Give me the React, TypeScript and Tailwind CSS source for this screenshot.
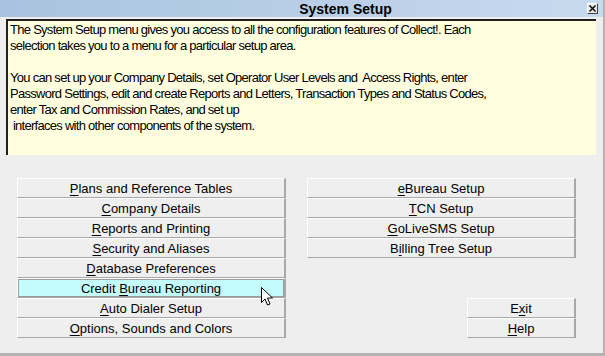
const leftButtons: [string, string, string][] = [
  ["", "P", "lans and Reference Tables"],
  ["", "C", "ompany Details"],
  ["", "R", "eports and Printing"],
  ["", "S", "ecurity and Aliases"],
  ["", "D", "atabase Preferences"],
  ["Credit ", "B", "ureau Reporting"],
  ["", "A", "uto Dialer Setup"],
  ["", "O", "ptions, Sounds and Colors"],
];

const rightButtons: [string, string, string][] = [
  ["", "e", "Bureau Setup"],
  ["", "T", "CN Setup"],
  ["", "G", "oLiveSMS Setup"],
  ["B", "i", "lling Tree Setup"],
];

const Btn = ({ label, active = false, className = "" }: { label: [string, string, string]; active?: boolean; className?: string }) => (
  <div
    className={`h-[20px] flex items-center justify-center text-[13px] leading-none text-black border-t border-l border-white border-b border-r-2 border-b-[#a8a8a8] border-r-[#a8a8a8] ${className}`}
  >
    <div
      className={`w-full h-full flex items-center justify-center ${active ? "bg-[#c4fcfc] border border-[#9c9c9c]" : "bg-[#efefef]"}`}
    >
      <span>
        {label[0]}
        <span className="underline underline-offset-2">{label[1]}</span>
        {label[2]}
      </span>
    </div>
  </div>
);

const Cursor = () => (
  <svg width="13" height="20" viewBox="0 0 13 20" className="absolute left-[261px] top-[287px]">
    <path d="M0.5 0.5 L0.5 15.5 L4 12 L6.5 18 L9 17 L6.5 11 L11.5 11 Z" fill="white" stroke="black" strokeWidth="1" />
  </svg>
);

const App = () => {
  return (
    <div className="relative w-[605px] h-[356px] bg-[#eeeeee] overflow-hidden font-['Liberation_Sans',Arial,sans-serif] flex flex-col border-r-2 border-b-[3px] border-[#b4b4b4]">
      {/* Title bar */}
      <div className="h-[17px] flex items-center bg-gradient-to-r from-[#a8c2df] to-[#c8daee] relative">
        <div className="flex-1 text-center pl-[104px] text-[14px] font-bold text-black leading-none">System Setup</div>
        <div className="w-[11px] h-[11px] mr-[5px] bg-[#e6e6e6] border border-t-white border-l-white border-b-[#404040] border-r-[#404040] flex items-center justify-center">
          <svg width="7" height="7" viewBox="0 0 7 7">
            <path d="M0.5 0.5 L6.5 6.5 M6.5 0.5 L0.5 6.5" stroke="black" strokeWidth="1.4" />
          </svg>
        </div>
      </div>

      {/* Description */}
      <div className="mt-[2px] ml-[6px] mr-[7px] h-[136px] bg-[#ffffe0] border-t-2 border-l-2 border-t-[#202020] border-l-[#202020] px-[2px] pt-[1px] text-[13px] leading-[16px] text-black tracking-[-0.72px] whitespace-nowrap">
        <p>
          The System Setup menu gives you access to all the configuration features of Collect!. Each
          <br />
          selection takes you to a menu for a particular setup area.
        </p>
        <p className="mt-[16px]">
          You can set up your Company Details, set Operator User Levels and&nbsp; Access Rights, enter
          <br />
          Password Settings, edit and create Reports and Letters, Transaction Types and Status Codes,
          <br />
          enter Tax and Commission Rates, and set up
          <br />
          &nbsp;interfaces with other components of the system.
        </p>
      </div>

      {/* Buttons */}
      <div className="mt-[23px] ml-[17px] flex gap-[21px]">
        <div className="w-[269px] flex flex-col">
          {leftButtons.map((b, i) => (
            <Btn key={i} label={b} active={i === 5} />
          ))}
        </div>
        <div className="w-[269px] flex flex-col">
          {rightButtons.map((b, i) => (
            <Btn key={i} label={b} />
          ))}
          <div className="h-[40px]" />
          <div className="self-end w-[109px] flex flex-col">
            <Btn label={["E", "x", "it"]} />
            <Btn label={["", "H", "elp"]} />
          </div>
        </div>
      </div>

      <Cursor />
    </div>
  );
};

export default App;
